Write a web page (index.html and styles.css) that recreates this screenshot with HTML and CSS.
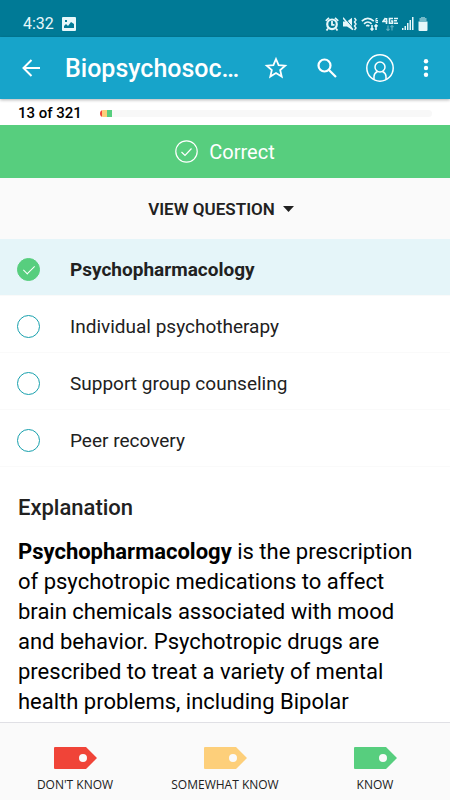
FILE: index.html
```html
<!DOCTYPE html>
<html lang="en">
<head>
    <meta charset="UTF-8">
    <meta name="viewport" content="width=device-width, initial-scale=1.0">
    <title>Flashcards</title>
    <link rel="stylesheet" href="styles.css">
</head>
<body>
    <div class="status-bar">
        <span class="time">4:32</span>
        <svg width="14" height="14" viewBox="0 0 14 14"><path fill="#e6f7fa" fill-rule="evenodd" d="M1 0h12a1 1 0 0 1 1 1v12a1 1 0 0 1-1 1H1a1 1 0 0 1-1-1V1a1 1 0 0 1 1-1zM2 11h10V7L9 5 6 9 4 7 2 9zM3 3v2h2V3z"/></svg>
        <div class="status-icons">
            <svg width="14" height="14" viewBox="0 0 14 14" fill="none" stroke="#e6f7fa"><circle cx="7" cy="7.300" r="4.800" stroke-width="2.200"/><path stroke-width="1.800" d="M7 4v3.800h2.500M.8 3.800L4 .9M13.200 3.800L10 .9M3 11.500L1.500 13.500M11 11.500l1.500 2"/></svg>
            <svg width="14" height="14" viewBox="0 0 14 14"><path fill="#e6f7fa" d="M0 4.500h4L9 .8v12L4 9.500H0z"/><path stroke="#007a96" stroke-width="1" d="M1.500 .5l9 11"/><path fill="none" stroke="#e6f7fa" stroke-width="1.400" d="M0 .8l10 12M11.500 1l1.500 2-1.500 2 1.500 2-1.500 2 1.500 2-1.500 2"/></svg>
            <svg width="17" height="14" viewBox="0 0 17 14" fill="none" stroke="#e6f7fa" stroke-width="1.600"><path d="M.8 4.200q6-5.500 12 0M3 6.800q3.800-3.600 7.600 0M5.200 9.200q1.700-1.500 3.200 0M11 8v5M9.500 11.500L11 13l1.500-1.500M15 13V8M13.500 9.500L15 8l1.500 1.500"/><path stroke-width="1" d="M16.500 1.500h-1.500v4h2v-2h-2"/></svg>
            <svg width="16" height="14" viewBox="0 0 16 14" fill="none" stroke="#e6f7fa" stroke-width="1.600"><path d="M3.500 1L1 4.500h4.500M4.500 1v6M11 1.500H7.500v4.700h3V4H9M16 1.500h-4M15 3.800h-3M16 6.200h-4"/><path stroke="#5badbf" stroke-width="1.200" d="M6 8.500v5M4.500 12L6 13.500 7.500 12M10 13.500v-5M8.500 10L10 8.500l1.500 1.500"/></svg>
            <svg width="12" height="13" viewBox="0 0 12 13"><path fill="#e6f7fa" d="M0 11h1.500v2H0zM2.500 9H4v4H2.500zM5 6h1.500v7H5zM7.500 3H9v10H7.500zM10 0h1.500v13H10z"/></svg>
            <svg width="10" height="14" viewBox="0 0 10 14"><path fill="#73b9c8" d="M3 0h4v1h1.500v3h-7V1H3z"/><path fill="#e6f7fa" d="M.5 4.500h9V13q0 1-1 1h-7q-1 0-1-1z"/></svg>
        </div>
    </div>

    <header class="toolbar">
        <button aria-label="Back">
            <svg width="18" height="18" viewBox="0 0 18 18" fill="none" stroke="#fff" stroke-width="2"><path d="M18 9H1.500M9.500 1L1.500 9l8 8"/></svg>
        </button>
        <h1>Biopsychosocial Assessment</h1>
        <div class="actions">
            <button aria-label="Favorite">
                <svg width="24" height="24" viewBox="-1 -1 24 24" fill="none" stroke="#fff" stroke-width="1.800"><path d="M11 2l2.600 6.100 6.600.6-5 4.400 1.500 6.500-5.700-3.500-5.700 3.500 1.500-6.500-5-4.400 6.600-.6z"/></svg>
            </button>
            <button aria-label="Search">
                <svg width="20" height="20" viewBox="0 0 20 20" fill="none" stroke="#fff" stroke-width="2.200"><circle cx="7.500" cy="7.500" r="6"/><path d="M12 12l7 7"/></svg>
            </button>
            <button aria-label="Profile">
                <svg width="28" height="28" viewBox="0 0 28 28" fill="none" stroke="#fff" stroke-width="1.500"><circle cx="14" cy="14" r="13.200"/><circle cx="14" cy="13" r="5"/><path d="M8 25.500v-3c0-2.500 1.500-4 3.500-5M20 25.500v-3c0-2.500-1.500-4-3.500-5"/></svg>
            </button>
            <button aria-label="More options">
                <svg width="6" height="18" viewBox="0 0 6 18" fill="#fff"><circle cx="3" cy="2.300" r="2.200"/><circle cx="3" cy="9" r="2.200"/><circle cx="3" cy="15.700" r="2.200"/></svg>
            </button>
        </div>
    </header>

    <div class="progress">
        <span>13 of 321</span>
        <div class="track">
            <div class="red"></div>
            <div class="yellow"></div>
            <div class="green"></div>
        </div>
    </div>

    <main>
        <div class="result">
            <svg width="23" height="23" viewBox="0 0 23 23" fill="none" stroke="#fff" stroke-width="1.200"><circle cx="11.500" cy="11.500" r="10.700"/><path d="M6.500 12l3.500 3.500 6.500-7"/></svg>
            <span>Correct</span>
        </div>
        <button class="view-question">VIEW QUESTION
            <svg width="11" height="6" viewBox="0 0 11 6"><path fill="#212121" d="M0 0h11L5.500 6z"/></svg>
        </button>
        <form class="answers">
            <label><input type="radio" name="answer" checked><span>Psychopharmacology</span></label>
            <label><input type="radio" name="answer"><span>Individual psychotherapy</span></label>
            <label><input type="radio" name="answer"><span>Support group counseling</span></label>
            <label><input type="radio" name="answer"><span>Peer recovery</span></label>
        </form>
        <section class="explanation">
            <h2>Explanation</h2>
            <p><b>Psychopharmacology</b> is the prescription of psychotropic medications to affect brain chemicals associated with mood and behavior. Psychotropic drugs are prescribed to treat a variety of mental health problems, including Bipolar</p>
        </section>
    </main>

    <footer class="ratings">
        <button class="dont-know">
            <svg width="43" height="22" viewBox="0 0 43 22"><path fill="currentColor" fill-rule="evenodd" d="M1 0h31l11 11-11 11H1q-1 0-1-1V1q0-1 1-1zM29 7a4 4 0 1 0 0 8 4 4 0 1 0 0-8z"/></svg>
            <span>DON'T KNOW</span>
        </button>
        <button class="somewhat">
            <svg width="43" height="22" viewBox="0 0 43 22"><path fill="currentColor" fill-rule="evenodd" d="M1 0h31l11 11-11 11H1q-1 0-1-1V1q0-1 1-1zM29 7a4 4 0 1 0 0 8 4 4 0 1 0 0-8z"/></svg>
            <span>SOMEWHAT KNOW</span>
        </button>
        <button class="know">
            <svg width="43" height="22" viewBox="0 0 43 22"><path fill="currentColor" fill-rule="evenodd" d="M1 0h31l11 11-11 11H1q-1 0-1-1V1q0-1 1-1zM29 7a4 4 0 1 0 0 8 4 4 0 1 0 0-8z"/></svg>
            <span>KNOW</span>
        </button>
    </footer>
</body>
</html>
```
FILE: styles.css
```css
* {
    box-sizing: border-box;
}
body {
    font-family: Roboto, sans-serif;
    display: flex;
    flex-direction: column;
    height: 100vh;
    margin: 0;
    background-color: #fff;
    color: #212121;
}
button {
    font-family: inherit;
    border: none;
    padding: 0;
    background: none;
    cursor: pointer;
}
svg {
    display: block;
    flex: none;
}
.status-bar {
    display: flex;
    align-items: center;
    gap: 8px;
    padding: 14px 22px 4px 23px;
    background-color: #007a96;
    color: #e6f7fa;
}
.time {
    font-size: 16px;
    line-height: 19px;
}
.status-icons {
    display: flex;
    align-items: center;
    gap: 4px;
    margin-left: auto;
}
.toolbar {
    display: flex;
    align-items: center;
    gap: 22px;
    height: 62px;
    flex: none;
    padding: 0 21px 0 22px;
    background-color: #17a4ca;
    box-shadow: 0 1px 3px rgba(0,0,0,.3);
    z-index: 1;
}
.toolbar h1 {
    flex: 1;
    min-width: 0;
    margin: 0;
    padding: 2px 0 0 3px;
    font-size: 25px;
    line-height: 32px;
    font-weight: 500;
    color: #fff;
    white-space: nowrap;
    overflow: hidden;
    text-overflow: ellipsis;
}
.actions {
    display: flex;
    align-items: center;
    gap: 29px;
}
.progress {
    display: flex;
    align-items: center;
    gap: 18px;
    height: 26px;
    flex: none;
    padding: 2px 18px 0;
    font-size: 15px;
    line-height: 20px;
    font-weight: 500;
    color: #000;
}
.track {
    display: flex;
    flex: 1;
    height: 7px;
    border-radius: 4px;
    overflow: hidden;
    background-color: #f8f8f8;
}
.red {
    width: 2px;
    background-color: #f04438;
}
.yellow {
    width: 5px;
    background-color: #fdcf7a;
}
.green {
    width: 5px;
    background-color: #57ce7e;
}
main {
    flex: 1;
    min-height: 0;
    overflow: hidden;
}
.result {
    display: flex;
    justify-content: center;
    align-items: center;
    gap: 11px;
    height: 53px;
    background-color: #57ce7e;
    font-size: 20px;
    color: #fff;
}
.view-question {
    display: flex;
    justify-content: center;
    align-items: center;
    gap: 8px;
    width: 100%;
    height: 61px;
    padding-right: 8px;
    background-color: #fafafa;
    font-size: 17px;
    font-weight: 600;
    color: #212121;
}
.answers label {
    display: flex;
    align-items: center;
    gap: 30px;
    padding: 17px 17px 13px;
    border-bottom: 1px solid #fafafa;
    font-size: 19px;
    line-height: 24px;
}
.answers span {
    padding-top: 2px;
}
.answers input {
    appearance: none;
    width: 23px;
    height: 23px;
    margin: 0;
    border: 1px solid #17a0ad;
    border-radius: 50%;
}
.answers input:checked {
    border-color: #57ce7e;
    background: #57ce7e;
}
.answers input:checked::after {
    content: "";
    display: block;
    width: 5px;
    height: 10px;
    margin: 4px 0 0 8px;
    border: solid #fff;
    border-width: 0 1px 1px 0;
    transform: rotate(45deg);
}
.answers label:has(:checked) {
    background-color: #e5f5f9;
    font-weight: bold;
}
.explanation {
    padding: 26px 18px 0;
}
.explanation h2 {
    margin: 0 0 14px;
    font-size: 22px;
    line-height: 30px;
    font-weight: 500;
}
.explanation p {
    margin: 0;
    font-size: 22px;
    line-height: 30px;
    color: #000;
}
.ratings {
    display: grid;
    grid-template-columns: repeat(3, 1fr);
    padding: 24px 0 7px;
    border-top: 1px solid #e0e0e5;
    background-color: #fafafa;
}
.ratings button {
    display: flex;
    flex-direction: column;
    align-items: center;
    gap: 7px;
    font-family: "Open Sans", sans-serif;
    font-size: 12px;
    line-height: 17px;
}
.ratings span {
    color: #212121;
}
.dont-know {
    color: #f04438;
}
.somewhat {
    color: #fdcf7a;
}
.know {
    color: #57ce7e;
}
```
